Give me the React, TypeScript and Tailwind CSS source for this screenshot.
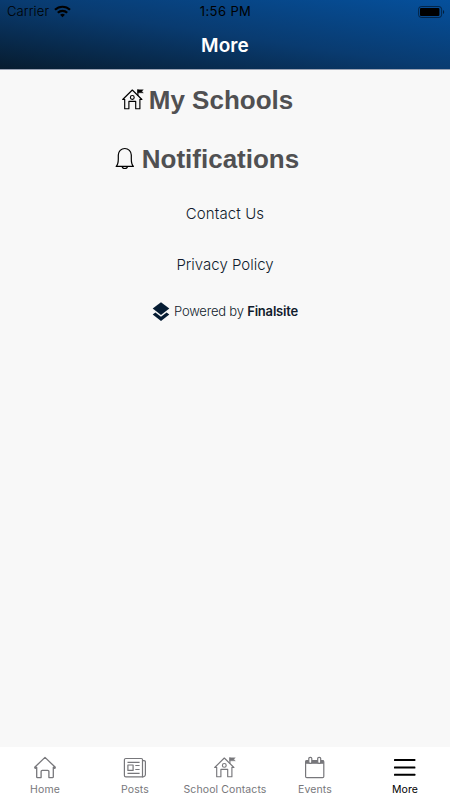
import type { ReactNode } from "react";

const HomeIcon = () => (
  <svg width="24" height="24" viewBox="0 0 24 24" fill="none" stroke="currentColor" strokeWidth="1.3" strokeLinejoin="round" strokeLinecap="round">
    <path d="M3.7 11.3 2.2 12.4l-.5-1.1L12 1.4l10.3 9.9-.5 1.1-1.5-1.1v9.6a.7.7 0 0 1-.7.7h-3.7v-6.1a1.2 1.2 0 0 0-1.2-1.2H9.3a1.2 1.2 0 0 0-1.2 1.2v6.1H4.4a.7.7 0 0 1-.7-.7z" />
  </svg>
);

const PostsIcon = () => (
  <svg width="24" height="24" viewBox="0 0 24 24" fill="none" stroke="currentColor" strokeWidth="1.2" strokeLinejoin="round">
    <path d="M2.8 2.5h15.6a1.1 1.1 0 0 1 1.1 1.1v17.2H2.8a1.4 1.4 0 0 1-1.4-1.4V3.9a1.4 1.4 0 0 1 1.4-1.4z" />
    <path d="M19.5 4.6h1.6a1.3 1.3 0 0 1 1.3 1.3v12.7a2.2 2.2 0 0 1-2.2 2.2h-1.1" />
    <path d="M4.9 9h5.2v5.4H4.9zM4.5 6.3h12.1M12.3 9.5h4.3M12.3 13.5h4.3M4.5 17.3h12.1" />
  </svg>
);

const SchoolIcon = () => (
  <svg width="24" height="24" viewBox="0 0 24 24" fill="none" stroke="currentColor" strokeWidth="1.15" strokeLinejoin="round" strokeLinecap="round">
    <path d="m1.7 11.5 9.6-9.5 9.6 9.5M3.7 11.2v9.5h4.2v-7.4h6.8v7.4h4.2v-9.5M1.7 11.5h1.8M19.1 11.5h1.8" />
    <circle cx="11.3" cy="9.4" r="1.9" />
    <path d="M16.9 7.2V1.8" />
    <path d="M16.9 1.8h5.4l-1.6 1.5 1.6 1.5h-5.4z" fill="currentColor" strokeWidth=".4" />
  </svg>
);

const EventsIcon = () => (
  <svg width="24" height="24" viewBox="0 0 24 24" fill="none" stroke="currentColor" strokeWidth="1.2">
    <rect x="2.6" y="4.6" width="18.2" height="17.1" rx="1.2" />
    <path d="M2.6 4.4h18.2v3.4H2.6z" fill="currentColor" stroke="none" />
    <rect x="5.8" y="1.3" width="3" height="6" rx="1.3" fill="#fff" />
    <rect x="14.7" y="1.3" width="3" height="6" rx="1.3" fill="#fff" />
  </svg>
);

const MenuIcon = () => (
  <svg width="24" height="24" viewBox="0 0 24 24" fill="currentColor">
    <rect x="1" y="3" width="21.4" height="2" rx=".5" />
    <rect x="1" y="10.5" width="21.4" height="1.9" rx=".5" />
    <rect x="1" y="17.8" width="21.4" height="1.9" rx=".5" />
  </svg>
);

const BellIcon = () => (
  <svg width="20" height="24" viewBox="0 0 20 24" fill="none" stroke="currentColor" strokeWidth="1.2" strokeLinejoin="round" strokeLinecap="round">
    <path d="M1.2 19.4c1.6-1.6 2.1-3.7 2.1-7.3V8a6.5 6.5 0 0 1 13 0v4.1c0 3.6.5 5.7 2.1 7.3z" />
    <path d="M7.2 19.6c.2 2.5 5 2.5 5.2 0" />
  </svg>
);

const WifiIcon = () => (
  <svg width="17" height="13" viewBox="0 0 17 13" fill="none" stroke="currentColor" strokeWidth="2.2">
    <path d="M1 4.8a10.7 10.7 0 0 1 15 0M3.8 7.7a6.8 6.8 0 0 1 9.4 0" />
    <path d="M8.5 12.2 6.1 9.8a3.5 3.5 0 0 1 4.8 0z" fill="currentColor" stroke="none" />
  </svg>
);

const BatteryIcon = () => (
  <svg width="27" height="12" viewBox="0 0 27 12">
    <rect x=".6" y=".5" width="23" height="11" rx="2.7" fill="none" stroke="#000" strokeOpacity=".5" />
    <rect x="2" y="2" width="19.4" height="8" rx="1.1" />
    <path d="M25 4c1.6.6 1.6 3.4 0 4z" fillOpacity=".6" />
  </svg>
);

const FinalsiteLogo = () => (
  <svg width="18" height="20" viewBox="0 0 18 20" fill="#061c33">
    <path d="m9 .2 8.3 6.3L9 12.9.7 6.5z" />
    <path d="M.7 12.6 3.4 10.5 9 14.8l5.6-4.3 2.7 2.1L9 19.1z" />
  </svg>
);

const tabs: { label: string; icon: ReactNode; active?: boolean }[] = [
  { label: "Home", icon: <HomeIcon /> },
  { label: "Posts", icon: <PostsIcon /> },
  { label: "School Contacts", icon: <SchoolIcon /> },
  { label: "Events", icon: <EventsIcon /> },
  { label: "More", icon: <MenuIcon />, active: true },
];

const App = () => {
  return (
    <div className="flex h-[800px] w-[450px] flex-col overflow-hidden bg-[#f8f8f8] font-['Inter',sans-serif]">
      <header className="h-[70px] shrink-0 border-b border-[#9ca4b5] bg-[linear-gradient(to_top_right,#071c2f_0%,#093b70_50%,#05509c_100%)]">
        <div className="grid h-[23px] grid-cols-3 items-center pr-[5px] pl-[7px] text-[13px] text-black">
          <div className="flex items-center gap-[5px]">
            <span className="font-light tracking-[0.1px]">Carrier</span>
            <WifiIcon />
          </div>
          <span className="-ml-px text-center tracking-[0.4px]">1:56 PM</span>
          <div className="flex justify-end">
            <BatteryIcon />
          </div>
        </div>
        <h1 className="text-center text-[19px] leading-[46px] font-semibold tracking-[0.1px] text-white">More</h1>
      </header>

      <main className="flex flex-1 flex-col items-center">
        <button className="mt-[15px] mr-[36px] flex h-[30px] items-center gap-[4px] font-['Liberation_Sans',sans-serif] text-[26px] font-bold text-[#505052]">
          <span className="text-black"><SchoolIcon /></span>
          My Schools
        </button>
        <button className="mt-[29px] mr-[36px] flex h-[30px] items-center gap-[7px] font-['Liberation_Sans',sans-serif] text-[26px] font-bold text-[#505052]">
          <span className="text-black"><BellIcon /></span>
          Notifications
        </button>
        <a className="mt-[30px] text-[15px] leading-5 font-light tracking-[0.1px] text-[#101b2c]">Contact Us</a>
        <a className="mt-[31px] text-[15px] leading-5 font-light text-[#101b2c]">Privacy Policy</a>
        <div className="mt-[27px] flex h-5 items-center gap-[4px] text-[13px] text-[#101b2c]">
          <FinalsiteLogo />
          <span className="font-light tracking-[-0.2px]">Powered by <b className="font-semibold tracking-[-0.2px]">Finalsite</b></span>
        </div>
      </main>

      <nav className="grid h-[53px] shrink-0 grid-cols-5 bg-white">
        {tabs.map((tab) => (
          <div
            key={tab.label}
            className={`flex flex-col items-center pt-[9px] text-[10.5px] whitespace-nowrap ${tab.active ? "text-black" : "text-[#77777b]"}`}
          >
            {tab.icon}
            <span className="mt-[2px] leading-4 tracking-[0.1px]">{tab.label}</span>
          </div>
        ))}
      </nav>
    </div>
  );
};

export default App;
